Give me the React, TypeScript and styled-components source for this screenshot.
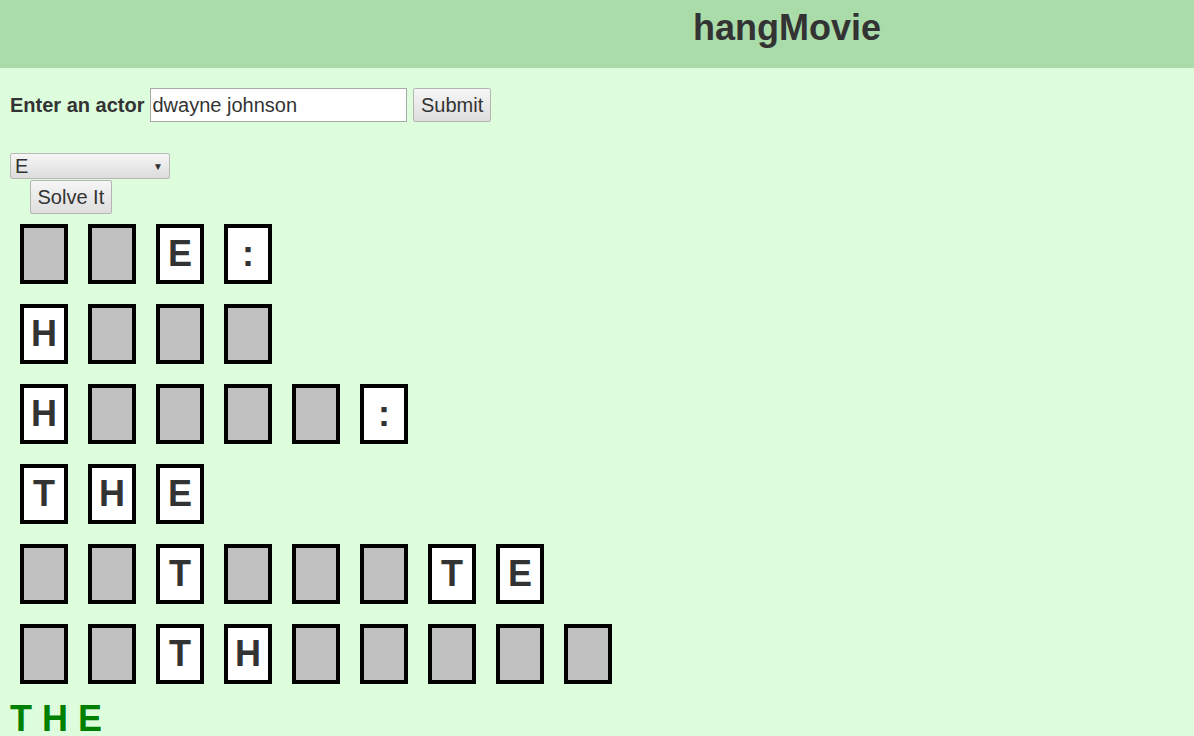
import React from "react";
import styled, { createGlobalStyle } from "styled-components";

const Global = createGlobalStyle`
  html, body {
    margin: 0;
    padding: 0;
    background: #ddfddd;
    font-family: "Liberation Sans", Arial, sans-serif;
    color: #333;
  }
`;

const Header = styled.header`
  height: 68px;
  box-sizing: border-box;
  background: #aadcaa;
  padding: 7px 0 0 380px;
`;

const Title = styled.h1`
  margin: 0;
  text-align: center;
  font-size: 36px;
  font-weight: bold;
  color: #333;
`;

const Main = styled.main`
  padding: 20px 10px 0;
`;

const FormRow = styled.form`
  display: flex;
  align-items: center;
  gap: 6px;
  margin: 0;
`;

const Label = styled.label`
  font-size: 20px;
  font-weight: bold;
`;

const TextInput = styled.input`
  width: 257px;
  height: 34px;
  box-sizing: border-box;
  font-family: "Liberation Sans", Arial, sans-serif;
  font-size: 20px;
  color: #333;
  border: 1px solid #a9a9a9;
  padding: 0 1px;
  background: #fff;
  outline: none;
`;

const Button = styled.button<{ $indent?: number }>`
  height: 34px;
  box-sizing: border-box;
  padding: 0 6.5px;
  margin-left: ${(p) => p.$indent ?? 0}px;
  font-family: "Liberation Sans", Arial, sans-serif;
  font-size: 20px;
  color: #333;
  border: 1px solid #b4b4b4;
  border-radius: 2px;
  background: linear-gradient(#f6f6f6, #dedede);
`;

const SelectBox = styled.div`
  margin-top: 31px;
  width: 160px;
  height: 26px;
  box-sizing: border-box;
  border: 1px solid #b8b8b8;
  border-radius: 2px;
  background: linear-gradient(#f6f6f6, #dcdcdc);
  display: flex;
  align-items: center;
  justify-content: space-between;
  padding: 0 6px 0 4px;
  font-size: 20px;
  color: #333;
`;

const Arrow = styled.span`
  font-size: 10px;
  color: #333;
`;

const SolveWrap = styled.div`
  margin-top: 1px;
`;

const Board = styled.div`
  display: flex;
  flex-direction: column;
`;

const Row = styled.div`
  display: flex;
`;

const Tile = styled.div<{ $open: boolean }>`
  width: 48px;
  height: 60px;
  box-sizing: border-box;
  margin: 10px;
  border: 4px solid #000;
  background: ${(p) => (p.$open ? "#fff" : "#c0c0c0")};
  display: flex;
  align-items: center;
  justify-content: center;
  font-size: 36px;
  line-height: 1;
  font-weight: bold;
  color: #333;
`;

const Guessed = styled.div`
  margin-top: 4px;
  font-size: 36px;
  font-weight: bold;
  color: #008000;
`;

const rows: string[][] = [
  ["", "", "E", ":"],
  ["H", "", "", ""],
  ["H", "", "", "", "", ":"],
  ["T", "H", "E"],
  ["", "", "T", "", "", "", "T", "E"],
  ["", "", "T", "H", "", "", "", "", ""],
];

export default function App() {
  return (
    <>
      <Global />
      <Header>
        <Title>hangMovie</Title>
      </Header>
      <Main>
        <FormRow onSubmit={(e) => e.preventDefault()}>
          <Label>Enter an actor</Label>
          <TextInput defaultValue="dwayne johnson" />
          <Button type="submit">Submit</Button>
        </FormRow>
        <SelectBox>
          <span>E</span>
          <Arrow>▼</Arrow>
        </SelectBox>
        <SolveWrap>
          <Button $indent={20}>Solve It</Button>
        </SolveWrap>
        <Board>
          {rows.map((r, i) => (
            <Row key={i}>
              {r.map((c, j) => (
                <Tile key={j} $open={c !== ""}>
                  {c}
                </Tile>
              ))}
            </Row>
          ))}
        </Board>
        <Guessed>T H E</Guessed>
      </Main>
    </>
  );
}
